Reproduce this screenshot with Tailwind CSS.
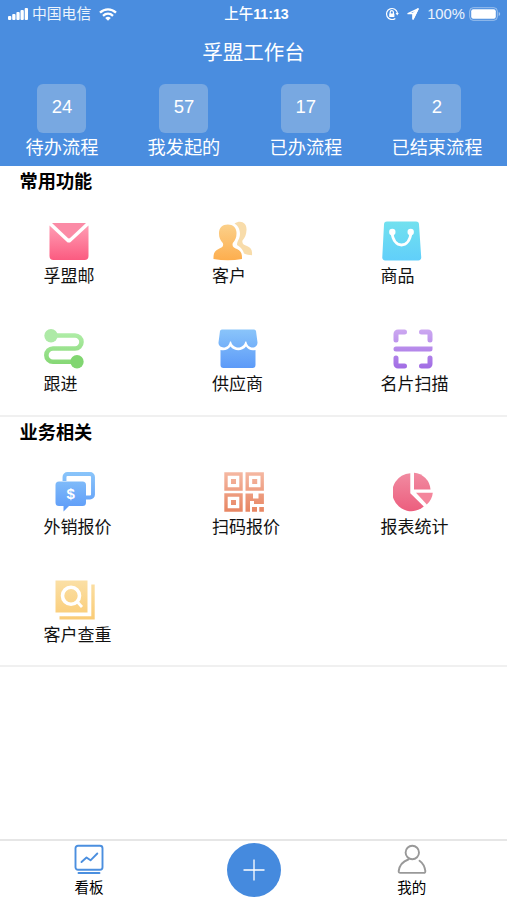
<!DOCTYPE html>
<html lang="zh-CN">
<head>
<meta charset="utf-8">
<meta name="viewport" content="width=device-width, initial-scale=1">
<title>孚盟工作台</title>
<script src="https://cdn.jsdelivr.net/npm/@tailwindcss/browser@4"></script>
</head>
<body class="bg-white">
<div class="flex h-[900px] w-[507px] flex-col overflow-hidden bg-white font-['Liberation_Sans','Noto_Sans_CJK_SC',sans-serif] text-[#111]">
  <header class="h-[166px] shrink-0 bg-[#4a8ddf] text-white">
    <div class="grid h-7 grid-cols-3 items-center pr-[6px] pl-2 text-[14.5px] leading-7">
      <div class="flex items-center">
        <svg class="h-3 w-5" viewBox="0 0 20 12" fill="#fff"><rect y="8" width="3.300" height="4" rx="1"/><rect x="4.200" y="6" width="3.300" height="6" rx="1"/><rect x="8.400" y="4" width="3.300" height="8" rx="1"/><rect x="12.500" y="2" width="3.300" height="10" rx="1"/><rect x="16.700" y="0" width="3.300" height="12" rx="1"/></svg>
        <span class="ml-1 text-[14.8px] whitespace-nowrap text-white/90">中国电信</span>
        <svg class="ml-2 h-[13px] w-[18px]" viewBox="0 0 18 13" fill="none" stroke="#fff" stroke-width="2.300"><path d="M1 4.700C5.600.3 12.400.3 17 4.700M4 7.800c3-2.800 7-2.800 10 0"/><path d="M6.200 10a4.200 4.200 0 0 1 5.600 0L9 12.800z" fill="#fff" stroke="none"/></svg>
      </div>
      <div class="pl-[4px] text-center font-medium whitespace-nowrap">上午<span class="text-[14.2px] font-bold">11:13</span></div>
      <div class="flex items-center justify-end">
        <svg class="h-[14px] w-[14px]" viewBox="0 0 14 14" fill="none" stroke="#fff" stroke-width="1.200"><path d="M10.300 11.400A5.500 5.500 0 1 1 12.400 6"/><path d="M10.600 6h3.200l-1.600 2.400z" fill="#fff" stroke="none"/><path d="M5.200 7V5.300a1.600 1.600 0 0 1 3.200 0V7"/><rect x="4.200" y="6.400" width="5.200" height="3.600" rx=".6" fill="#fff" stroke="none"/></svg>
        <svg class="ml-2 h-3 w-3" viewBox="0 0 12 12" fill="none" stroke="#fff" stroke-width="1.400" stroke-linejoin="round"><path d="M11 1 1 5.600h5.100V11z"/><path d="M11 1 6.100 5.600V11z" fill="#fff"/></svg>
        <span class="ml-[8px] text-[14.8px] text-white/90">100%</span>
        <svg class="ml-[4px] h-[14px] w-8" viewBox="0 0 32 14"><rect x=".7" y=".7" width="27.600" height="12.600" rx="3.500" fill="none" stroke="#fff" stroke-opacity=".45"/><rect x="2.200" y="2.200" width="24.600" height="9.600" rx="2" fill="#fff"/><path d="M29.700 5v4c2-.8 2-3.200 0-4z" fill="#fff" fill-opacity=".5"/></svg>
      </div>
    </div>
    <h1 class="h-14 text-center text-[20.5px] leading-[50px]">孚盟工作台</h1>
    <div class="flex justify-around pl-[1px] text-[18.2px]">
      <div class="flex flex-col items-center"><div class="h-[49px] w-[49px] rounded-md bg-[#78a8e1] text-center text-[18.5px] leading-[45px]">24</div><div class="leading-[30px]">待办流程</div></div>
      <div class="flex flex-col items-center"><div class="h-[49px] w-[49px] rounded-md bg-[#78a8e1] text-center text-[18.5px] leading-[45px]">57</div><div class="leading-[30px]">我发起的</div></div>
      <div class="flex flex-col items-center"><div class="h-[49px] w-[49px] rounded-md bg-[#78a8e1] text-center text-[18.5px] leading-[45px]">17</div><div class="leading-[30px]">已办流程</div></div>
      <div class="flex flex-col items-center"><div class="h-[49px] w-[49px] rounded-md bg-[#78a8e1] text-center text-[18.5px] leading-[45px]">2</div><div class="leading-[30px]">已结束流程</div></div>
    </div>
  </header>

  <section class="h-[251px] shrink-0 border-b-2 border-[#f0f0f0]">
    <h2 class="h-[55px] pl-[19.5px] text-[18.2px] leading-[33px] font-bold text-black">常用功能</h2>
    <div class="grid auto-rows-[107.5px] grid-cols-[168.5px_168.5px_1fr] justify-items-start pl-[43.5px] text-[17px] leading-[32px]">
      <div class="flex flex-col items-center">
        <svg class="h-10 w-10" viewBox="0 0 40 40"><defs><linearGradient id="pink" x2="0" y2="1"><stop stop-color="#ff9db4"/><stop offset="1" stop-color="#fb5b80"/></linearGradient></defs><path d="M3 2h34L21.300 16.800a2 2 0 0 1-2.700 0z" fill="#fb8ba6"/><path d="M.5 4.500 17.500 20.400a3.300 3.300 0 0 0 4.700 0L39.500 4.500V35a4 4 0 0 1-4 4h-31a4 4 0 0 1-4-4z" fill="url(#pink)"/></svg>
        <span>孚盟邮</span>
      </div>
      <div class="flex flex-col">
        <svg class="ml-[1px] h-10 w-10" viewBox="0 0 40 40"><defs><linearGradient id="orange" x2="0" y2="1"><stop stop-color="#fbd08a"/><stop offset="1" stop-color="#fdae4e"/></linearGradient></defs><path d="M21.500 2.500C28-1.500 34 2 33.500 9c-.2 5-1.500 7.500-4 10.500-.8 3 1.500 4.300 4.500 5.500 4 1.700 5.500 4 5 9.200-3 0-5.500-.7-8-1.700-1.500-4.700-4-6.700-7-8.500 0-2 .500-3.500 1.600-5.500C28 14.500 27.600 6 21.500 2.500z" fill="#f8dcaa"/><path d="M14.800 3.500c5.500 0 9 3.500 8.700 9 0 4.500-1.300 6.500-3.700 9.500-1 3.500.8 4.500 4.200 6 4 1.700 5.200 4.500 5 10Q14.800 40.500.5 38C.3 32.500 1.500 29.700 5.500 28c3.500-1.500 5.500-2.500 4.300-6C7.300 19 6 17 6 12.500c-.2-5.500 3.300-9 8.800-9z" fill="url(#orange)"/></svg>
        <span>客户</span>
      </div>
      <div class="flex flex-col">
        <svg class="ml-[1px] h-10 w-10" viewBox="0 0 40 40"><defs><linearGradient id="cyan" x2="0" y2="1"><stop stop-color="#72e1ef"/><stop offset="1" stop-color="#61cffa"/></linearGradient></defs><path d="M5 .5h29a3 3 0 0 1 3 3l2.200 32.500a3 3 0 0 1-3 3.500H3.300a3 3 0 0 1-3-3.500L2 3.500a3 3 0 0 1 3-3z" fill="url(#cyan)"/><circle cx="10.300" cy="11" r="3.200" fill="#fff"/><circle cx="28.700" cy="11" r="3.200" fill="#fff"/><path d="M9.800 11c1 8.500 5 13 9.700 13s8.700-4.500 9.700-13" fill="none" stroke="#fff" stroke-width="2.800"/></svg>
        <span>商品</span>
      </div>
      <div class="flex flex-col">
        <svg class="ml-[.5px] h-10 w-10" viewBox="0 0 40 40"><defs><linearGradient id="green" gradientUnits="userSpaceOnUse" x1="0" y1="0" x2="0" y2="40"><stop stop-color="#b5f0ae"/><stop offset="1" stop-color="#7fd46d"/></linearGradient></defs><path d="M7 6.500h24a6.500 6.500 0 0 1 0 13H9a6.600 6.600 0 0 0 0 13.300h24" fill="none" stroke="url(#green)" stroke-width="4.600"/><circle cx="7" cy="6.700" r="6.700" fill="#aeeaa7"/><circle cx="33" cy="32.800" r="6.700" fill="#81d671"/></svg>
        <span>跟进</span>
      </div>
      <div class="flex flex-col items-center">
        <svg class="h-10 w-10" viewBox="0 0 40 40"><defs><linearGradient id="blue" gradientUnits="userSpaceOnUse" x1="0" y1="0" x2="0" y2="40"><stop stop-color="#8ac5fa"/><stop offset="1" stop-color="#5b99f8"/></linearGradient></defs><path d="M4 .5h32a2 2 0 0 1 2 1.500l1.500 11.500c.2 3-2.200 5-4.700 5-3.500 0-5.700-2.200-6.500-6h-1c-.8 3.600-3.500 6-7 6s-6.500-2.400-7.300-6h-1c-.8 3.800-3 6-6.500 6-2.500 0-5.200-2-5-5L2 2A2 2 0 0 1 4 .5z" fill="url(#blue)"/><path d="M2.500 21c4.500 1 7.800-.5 10-3.500 4 5 11.500 5 15.500 0 2.200 3 5 4.500 9.500 3.500v15a3 3 0 0 1-3 3h-29a3 3 0 0 1-3-3z" fill="url(#blue)"/></svg>
        <span>供应商</span>
      </div>
      <div class="flex flex-col items-center">
        <svg class="mr-1 h-10 w-10" viewBox="0 0 40 40"><defs><linearGradient id="purple" gradientUnits="userSpaceOnUse" x1="0" y1="0" x2="0" y2="40"><stop stop-color="#cda9f1"/><stop offset="1" stop-color="#a06be4"/></linearGradient></defs><path d="M3 11V5a2 2 0 0 1 2-2h6.500M28.500 3H35a2 2 0 0 1 2 2v6M3 29v6a2 2 0 0 0 2 2h6.500M28.500 37H35a2 2 0 0 0 2-2v-6M3 20h34v.01" fill="none" stroke="url(#purple)" stroke-width="5" stroke-linecap="round"/></svg>
        <span>名片扫描</span>
      </div>
    </div>
  </section>

  <section class="h-[250px] shrink-0 border-b-2 border-[#f0f0f0]">
    <h2 class="h-[55px] pl-[19.5px] text-[18.2px] leading-[32px] font-bold text-black">业务相关</h2>
    <div class="grid auto-rows-[107.5px] grid-cols-[168.5px_168.5px_1fr] justify-items-start pl-[43.5px] text-[17px] leading-[31px]">
      <div class="flex flex-col items-center">
        <svg class="mr-[5px] h-10 w-10" viewBox="0 0 40 40"><path d="M9.500 9V5a3 3 0 0 1 3-3H35a3 3 0 0 1 3 3v17.500a3 3 0 0 1-3 3h-4" fill="none" stroke="url(#blue)" stroke-width="3.900"/><path d="M4 9.500h23.500a3.500 3.500 0 0 1 3.500 3.500v17.500a3.500 3.500 0 0 1-3.500 3.500H14l-5.500 5.500V34H4a3.500 3.500 0 0 1-3.500-3.500V13A3.500 3.500 0 0 1 4 9.500z" fill="url(#blue)"/><text x="15.700" y="26.500" text-anchor="middle" font-size="15" font-weight="bold" font-family="Liberation Sans" fill="#fff">$</text></svg>
        <span>外销报价</span>
      </div>
      <div class="flex flex-col items-center">
        <svg class="mr-[5px] h-10 w-10" viewBox="0 0 40 40"><defs><linearGradient id="coral" gradientUnits="userSpaceOnUse" x1="0" y1="0" x2="0" y2="40"><stop stop-color="#f5b8a2"/><stop offset="1" stop-color="#e78562"/></linearGradient></defs><g fill="none" stroke="url(#coral)" stroke-width="3.400"><path d="M2 2h15v15H2zM23.200 2h15v15h-15zM2 23h15v15H2z"/></g><path d="M7 7h5v5H7zM28.200 7h5v5h-5zM7 28h5v5H7zM21.500 21.500H29v5h5.500v-5h5.400V32H30v-3h-4v10.700h-4.500zM28 35h5v4.700h-5zM35.300 35h4.600v4.700h-4.600z" fill="url(#coral)"/></svg>
        <span>扫码报价</span>
      </div>
      <div class="flex flex-col items-center">
        <svg class="mr-1 h-10 w-10" viewBox="0 0 40 40"><defs><linearGradient id="rose" gradientUnits="userSpaceOnUse" x1="0" y1="0" x2="0" y2="40"><stop stop-color="#f18ca2"/><stop offset="1" stop-color="#ec5d7d"/></linearGradient></defs><path d="M17.300 1.200v20L30.800 34.500A19 19 0 1 1 17.300 1.200z" fill="url(#rose)"/><path d="M21 .7A18 18 0 0 1 37.500 17.500H21z" fill="url(#rose)"/><path d="M23 20.800h16.800a18 18 0 0 1-6 11.700z" fill="#f4869c"/></svg>
        <span>报表统计</span>
      </div>
      <div class="flex flex-col items-center">
        <svg class="mr-[5px] h-10 w-10" viewBox="0 0 40 40"><defs><linearGradient id="gold" gradientUnits="userSpaceOnUse" x1="0" y1="0" x2="0" y2="40"><stop stop-color="#fbe0a6"/><stop offset="1" stop-color="#facb75"/></linearGradient></defs><path d="M.5.500h32v32H.5zM36.300 4.500h3.400v35H4.500v-3.200h31.800z" fill="url(#gold)"/><g fill="none" stroke="#fff"><circle cx="16" cy="15.700" r="8.500" stroke-width="3.600"/><path d="m22 21.500 5 5.500" stroke-width="2.800"/></g></svg>
        <span>客户查重</span>
      </div>
    </div>
  </section>

  <main class="flex-1"></main>

  <nav class="grid h-[61px] shrink-0 grid-cols-[178px_151.5px_1fr] border-t-2 border-[#e6e6e6] text-[14.5px] leading-[27px] text-black">
    <div class="flex flex-col items-center pt-[3px]">
      <svg class="h-[31px] w-[30px]" viewBox="0 0 30 31" fill="none" stroke="#4b8fdf" stroke-width="1.900"><rect x="1.500" y="1.700" width="27" height="24" rx="2.500"/><path d="M4.500 29h21M7.500 18l5-4.500 4 2.800L23.300 9.500" stroke-linecap="round" stroke-linejoin="round"/></svg>
      <span>看板</span>
    </div>
    <div class="flex justify-center pt-[2px]">
      <div class="flex h-[54px] w-[54px] items-center justify-center rounded-full bg-[#458ade]">
        <svg class="h-[22px] w-[22px]" viewBox="0 0 22 22" stroke="#fff" stroke-width="1.300"><path d="M11 .5v21M.5 11h21"/></svg>
      </div>
    </div>
    <div class="flex flex-col items-center pt-[3px] pr-[13px]">
      <svg class="h-[31px] w-[30px]" viewBox="0 0 30 31" fill="none" stroke="#999" stroke-width="1.900" stroke-linecap="round" stroke-linejoin="round"><circle cx="15.300" cy="8.500" r="6.700"/><path d="M11.300 15.500C5.500 17.500 2.500 21.500 1.700 27c-.2 1.200.5 1.900 1.600 1.900h23.400c1.200 0 1.800-.8 1.600-1.900-.6-4.700-2.500-8-5.800-10.300"/></svg>
      <span>我的</span>
    </div>
  </nav>
</div>
</body>
</html>
